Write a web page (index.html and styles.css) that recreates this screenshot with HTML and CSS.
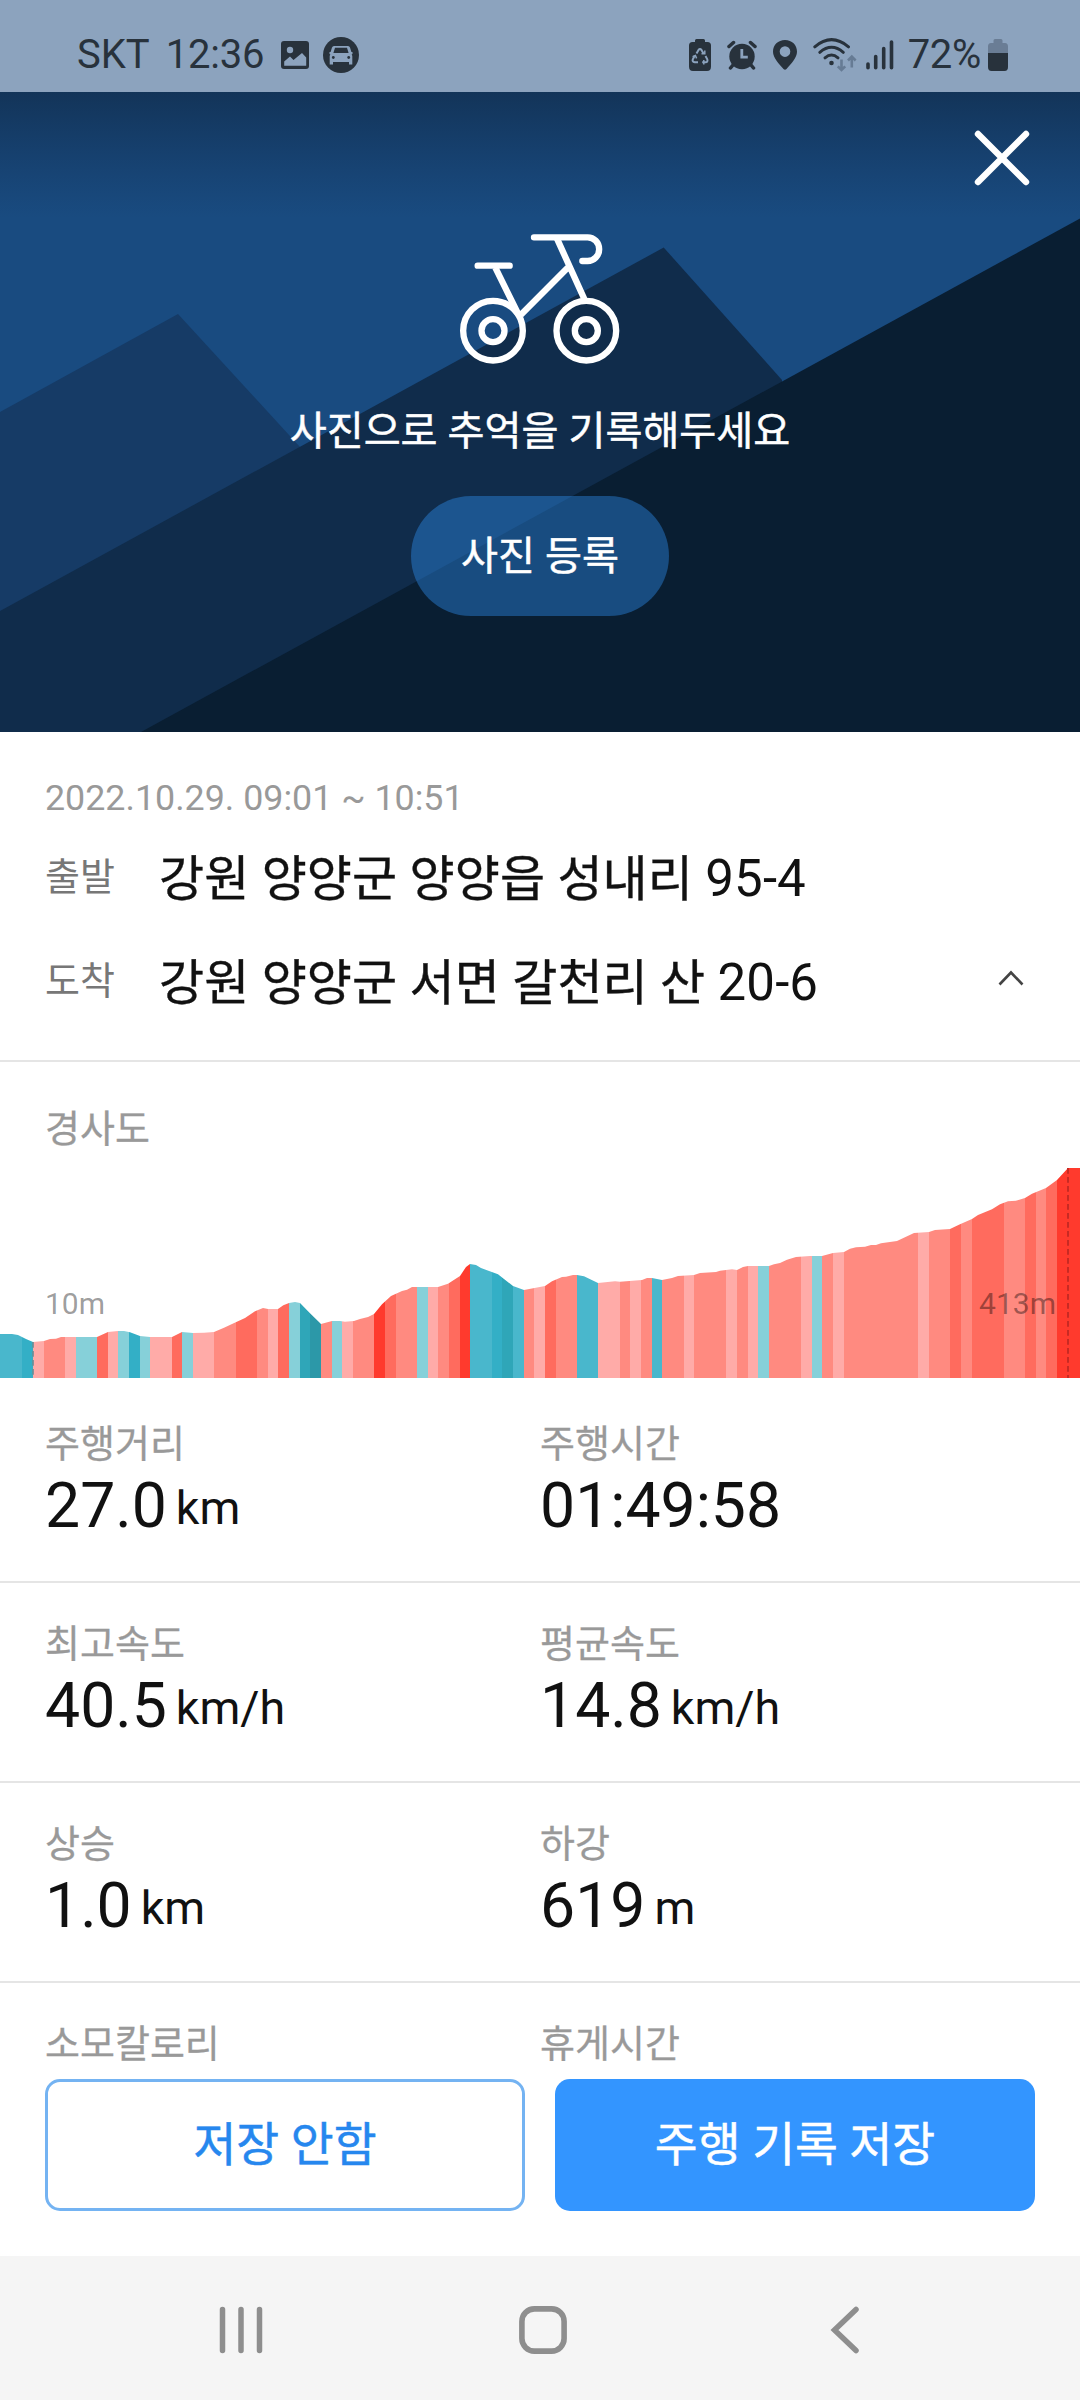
FILE: index.html
```html
<!DOCTYPE html>
<html lang="ko">
<head>
<meta charset="utf-8">
<title>주행 기록</title>
<link rel="stylesheet" href="styles.css">
</head>
<body>
<div class="screen">
  <header class="status">
    <div class="status-left">
      <span class="carrier">SKT</span>
      <span class="clock">12:36</span>
      <svg class="ic-photo" width="28" height="28" viewBox="0 0 28 28"><rect width="28" height="28" rx="3" fill="#28323c"/><circle cx="9" cy="9" r="3.2" fill="#8ca3be"/><path d="M3.2 24.8v-4.3L9 15.500l3.500 3.500L21 12l4.200 4.500v8.300z" fill="#8ca3be"/></svg>
      <svg class="ic-car" width="36" height="36" viewBox="0 0 36 36"><circle cx="18" cy="18" r="18" fill="#28323c"/><path fill="#8ca3be" d="M11 9h14q1.500 0 2 1.500l1.400 4.500h1.100v2l-.8.300.6 1.700v8.500h-3.300v-2.500H10v2.500H6.700V19l.6-1.700-.8-.3v-2h1.100L9 10.500Q9.500 9 11 9z"/><path fill="#28323c" d="M12 10.800h12l1.600 5.200H10.400z"/><circle cx="10.300" cy="20.500" r="1.400" fill="#28323c"/><circle cx="25.700" cy="20.500" r="1.400" fill="#28323c"/></svg>
    </div>
    <div class="status-right">
      <svg width="22" height="32" viewBox="0 0 22 32"><path fill="#28323c" d="M6 3V1.500Q6 0 7.500 0h7Q16 0 16 1.500V3h2.500Q22 3 22 6.500v21Q22 32 18 32H4q-4 0-4-4.500v-21Q0 3 3.500 3z"/><path d="M7.500 14.500 9.500 11q1.500-1.800 3 0l2 3.500M16.500 17l1.800 3.300q.8 2.700-1.800 3h-3.300M9 23.300H5.700q-2.800-.5-1.900-3L5.600 17" fill="none" stroke="#8ca3be" stroke-width="2"/><path d="M12.500 14.800h3.300v-3.200M14.800 21v4.500M3.600 17.700l2.800-1.300 1.200 3" fill="none" stroke="#8ca3be" stroke-width="1.500"/></svg>
      <svg class="ic-alarm" width="30" height="30" viewBox="0 0 30 30"><circle cx="15" cy="16.500" r="12.700" fill="#28323c"/><path d="M2 6.500 6.500 2.500M28 6.500 23.500 2.500M6 25l-2.500 3M24 25l2.500 3" stroke="#28323c" stroke-width="3.500" stroke-linecap="round"/><path d="M14.800 9v8.200h6" fill="none" stroke="#8ca3be" stroke-width="2.800"/></svg>
      <svg class="ic-pin" width="24" height="30" viewBox="0 0 24 30"><path fill="#28323c" fill-rule="evenodd" d="M12 0c7 0 12 5 12 11.800C24 18 18 24 13.500 29q-1.500 1.600-3 0C6 24 0 18 0 11.800 0 5 5 0 12 0zm0 6.300a5.300 5.300 0 1 0 0 10.600 5.300 5.300 0 0 0 0-10.600z"/></svg>
      <svg class="ic-wifi" width="44" height="34" viewBox="0 0 44 34"><g fill="none" stroke="#28323c" stroke-width="3" stroke-linecap="round"><path d="M1.800 8.800Q18.500-5.500 35.500 8.800"/><path d="M6.800 14.300q11.800-10 23.500 0"/><path d="M12 19.800q6.500-5.500 13 0"/></g><circle cx="18.500" cy="25" r="2.300" fill="#28323c"/><path d="M28.500 21.500v10M24.800 28.300l3.700 3.700 3.700-3.700M38.800 29.500v-10M35 22.500l3.800-3.800 3.800 3.800" fill="none" stroke="#667b94" stroke-width="2.600"/></svg>
      <svg class="ic-signal" width="28" height="30" viewBox="0 0 28 30"><path d="M2 24v3.800M9.700 16.500v11.300M17.700 8.500v19.300M25.500 2v25.800" stroke="#28323c" stroke-width="3.600" stroke-linecap="round"/></svg>
      <span class="percent">72%</span>
      <svg class="ic-battery" width="20" height="32" viewBox="0 0 20 32"><path fill="#6a7d95" d="M5.500 4V1.500Q5.500 0 7 0h6q1.500 0 1.500 1.500V4H17q3 0 3 3.500V14H0V7.500Q0 4 3 4z"/><path fill="#28323c" d="M0 14h20v14q0 4-3.500 4h-13Q0 32 0 28z"/></svg>
    </div>
  </header>

  <section class="hero">
    <svg class="hero-bg" width="1080" height="640" viewBox="0 92 1080 640">
      <defs><linearGradient id="shade" x1="0" y1="0" x2="0" y2="1"><stop offset="0" stop-color="#102b49" stop-opacity=".72"/><stop offset="1" stop-color="#123056" stop-opacity="0"/></linearGradient></defs>
      <rect y="92" width="1080" height="640" fill="#194b80"/>
      <path d="M0 412 178 314 300 447 300 732H0z" fill="#163b66"/>
      <path d="M0 611 663.700 247.500 782 380V732H0z" fill="#102c4b"/>
      <path d="M141 732 1080 218.500V732z" fill="#091e32"/>
      <rect y="92" width="1080" height="126" fill="url(#shade)"/>
    </svg>
    <svg class="close" width="64" height="64" viewBox="0 0 64 64"><path d="M8 8 56 56M56 8 8 56" stroke="#fff" stroke-width="6.400" stroke-linecap="round"/></svg>
    <svg class="bike" width="172" height="136" viewBox="162 90 516 408" fill="none" stroke="#fff" stroke-width="19" stroke-linecap="round">
      <circle cx="279" cy="392" r="89.500"/><circle cx="279" cy="392" r="34.500"/>
      <circle cx="559" cy="392" r="89.500"/><circle cx="559" cy="392" r="34.500"/>
      <path d="M233 197H329M402 112H563a34.500 35.500 0 0 1 0 71H547"/>
      <path d="M286 203 356 345M362 345 503 203M471 116 553 297" stroke-linecap="butt"/>
    </svg>
    <p class="hero-text">사진으로 추억을 기록해두세요</p>
    <button class="pill">사진 등록</button>
  </section>

  <main class="content">
    <section class="trip">
      <p class="date">2022.10.29. 09:01 ~ 10:51</p>
      <div class="place"><span class="place-label">출발</span><span class="address">강원 양양군 양양읍 성내리 <span class="num">95-4</span></span></div>
      <div class="place"><span class="place-label">도착</span><span class="address">강원 양양군 서면 갈천리 산 <span class="num">20-6</span></span>
        <svg class="chevron" width="28" height="18" viewBox="0 0 28 18"><path d="M2.500 15.500 14 3.500 25.500 15.500" fill="none" stroke="#444" stroke-width="2.600"/></svg>
      </div>
    </section>

    <section class="slope">
      <h2 class="label">경사도</h2>
      <div class="chart">
        <svg width="1080" height="210" viewBox="0 54 3240 630">
          <defs><clipPath id="profile"><path d="M0 552H36L54 555 78 567 99 576 132 573 150 567 168 566 183 561H291L324 546 354 543H372L390 547 420 558 450 561H516L546 546 579 549 612 548 642 546 672 533 696 522 735 504 765 484 789 474 804 477H834L850 466 867 459 885 456 900 459 930 490 963 522 996 513H1020L1035 515 1062 513 1080 507 1104 501 1122 492 1146 463 1173 438 1206 423 1221 419 1236 411H1314L1344 401 1380 378 1398 351 1410 342 1428 345 1443 354 1494 373 1539 408 1572 420 1635 408 1656 394 1686 381 1698 380 1719 375H1731L1752 379 1794 399 1845 394 1860 395 1926 390 1941 384H1956L1986 390 2016 384 2034 378 2082 375 2100 369 2148 366 2160 362 2196 358 2211 360 2229 351 2244 348H2307L2322 343 2340 339 2361 329 2388 321 2430 318H2466L2499 309 2532 306 2550 296 2568 292 2595 290 2613 285H2628L2643 280 2691 273 2742 249 2787 246 2805 240 2850 237 2880 223 2916 207 2934 195 2976 178 3000 163 3024 154 3048 152 3075 144 3096 131 3138 114 3171 90 3204 54H3240V684H0z"/></clipPath></defs>
          <g clip-path="url(#profile)">
            <g class="steep1"><path d="M99 54h33v630h-33zM195 54h33v630h-33zM324 54h30v630h-30zM450 54h66v630h-66zM579 54h63v630h-63zM804 54h30v630h-30zM1026 54h33v630h-33zM1284 54h30v630h-30zM1602 54h33v630h-33zM1794 54h66v630h-66zM1890 54h33v630h-33zM2052 54h30v630h-30zM2178 54h33v630h-33zM2244 54h30v630h-30zM2403 54h33v630h-33zM2499 54h33v630h-33zM2754 54h33v630h-33z"/></g>
            <g class="steep2"><path d="M132 54h63v630h-63zM642 54h66v630h-66zM771 54h33v630h-33zM963 54h33v630h-33zM1059 54h63v630h-63zM1188 54h63v630h-63zM1314 54h33v630h-33zM1572 54h30v630h-30zM1668 54h63v630h-63zM1860 54h30v630h-30zM1923 54h33v630h-33zM1986 54h66v630h-66zM2082 54h96v630h-96zM2211 54h33v630h-33zM2307 54h96v630h-96zM2466 54h33v630h-33zM2532 54h222v630h-222zM2787 54h63v630h-63zM2883 54h33v630h-33zM3012 54h63v630h-63zM3108 54h30v630h-30z"/></g>
            <g class="steep3"><path d="M291 54h33v630h-33zM516 54h30v630h-30zM708 54h63v630h-63zM834 54h33v630h-33zM1155 54h33v630h-33zM1347 54h33v630h-33zM1635 54h33v630h-33zM2850 54h33v630h-33zM2916 54h96v630h-96zM3075 54h33v630h-33zM3138 54h33v630h-33z"/></g>
            <g class="steep4"><path d="M1122 54h33v630h-33zM1380 54h30v630h-30zM3171 54h69v630h-69z"/></g>
            <g class="down1"><path d="M228 54h63v630h-63zM354 54h33v630h-33zM420 54h30v630h-30zM546 54h33v630h-33zM867 54h33v630h-33zM996 54h30v630h-30zM1251 54h33v630h-33zM2274 54h33v630h-33zM2436 54h30v630h-30z"/></g>
            <g class="down2"><path d="M0 54h66v630h-66zM1410 54h66v630h-66zM1539 54h33v630h-33zM1731 54h63v630h-63zM1956 54h30v630h-30z"/></g>
            <g class="down3"><path d="M66 54h33v630h-33zM387 54h33v630h-33zM1476 54h30v630h-30z"/></g>
            <g class="down4"><path d="M900 54h30v630h-30zM1506 54h33v630h-33z"/></g>
            <g class="down5"><path d="M930 54h33v630h-33z"/></g>
          </g>
          <path d="M99 576V684" stroke="#698e96" stroke-width="5" stroke-dasharray="17 10"/>
          <path d="M3204 54V684" stroke="#c82a24" stroke-width="6" stroke-dasharray="17 10"/>
        </svg>
        <span class="alt alt-start">10m</span>
        <span class="alt alt-end">413m</span>
      </div>
    </section>

    <section class="stats">
      <div class="row">
        <div class="stat"><h2 class="label">주행거리</h2><p class="value">27.0<span class="unit">km</span></p></div>
        <div class="stat"><h2 class="label">주행시간</h2><p class="value">01:49:58</p></div>
      </div>
      <div class="row">
        <div class="stat"><h2 class="label">최고속도</h2><p class="value">40.5<span class="unit">km/h</span></p></div>
        <div class="stat"><h2 class="label">평균속도</h2><p class="value">14.8<span class="unit">km/h</span></p></div>
      </div>
      <div class="row">
        <div class="stat"><h2 class="label">상승</h2><p class="value">1.0<span class="unit">km</span></p></div>
        <div class="stat"><h2 class="label">하강</h2><p class="value">619<span class="unit">m</span></p></div>
      </div>
      <div class="row">
        <div class="stat"><h2 class="label">소모칼로리</h2></div>
        <div class="stat"><h2 class="label">휴게시간</h2></div>
      </div>
    </section>
  </main>

  <footer class="actions">
    <button class="btn btn-outline">저장 안함</button>
    <button class="btn btn-fill">주행 기록 저장</button>
  </footer>

  <nav class="nav">
    <svg width="48" height="48" viewBox="0 0 48 48"><path d="M5.500 3.500v41M24 3.500v41M42.500 3.500v41" stroke="#8e8e8e" stroke-width="5.500" stroke-linecap="round"/></svg>
    <svg width="48" height="48" viewBox="0 0 48 48"><rect x="2.900" y="2.900" width="42.200" height="42.200" rx="12.500" fill="none" stroke="#8e8e8e" stroke-width="5.600"/></svg>
    <svg width="48" height="48" viewBox="0 0 48 48"><path d="M35 3.500 13.500 24 35 44.500" fill="none" stroke="#8e8e8e" stroke-width="5.500" stroke-linecap="round"/></svg>
  </nav>
</div>
</body>
</html>
```
FILE: styles.css
```css
* { box-sizing: border-box; margin: 0; padding: 0; }
body {
  font-family: Roboto, "Noto Sans CJK KR", sans-serif;
  font-weight: 400;
  color: #111;
  background: #fff;
}
svg { display: block; flex: none; }
button { font: inherit; border: 0; white-space: nowrap; }
.screen { width: 1080px; height: 2400px; display: flex; flex-direction: column; overflow: hidden; }

.status {
  height: 92px;
  padding: 18px 72px 0 77px;
  display: flex;
  justify-content: space-between;
  background: #8ca3be;
  color: #28323c;
  font-size: 40px;
  line-height: 74px;
}
.status-left, .status-right { display: flex; align-items: center; }
.clock { margin-left: 16px; letter-spacing: -0.2px; }
.ic-photo { margin-left: 17px; }
.ic-car { margin-left: 14px; }
.ic-alarm { margin-left: 16px; }
.ic-pin { margin-left: 16px; }
.ic-wifi { margin-left: 16px; }
.ic-signal { margin-left: 9px; }
.percent { margin-left: 14px; letter-spacing: -0.3px; }
.ic-battery { margin-left: 7px; }

.hero {
  position: relative;
  height: 640px;
  flex: none;
  display: flex;
  flex-direction: column;
  align-items: center;
  color: #fff;
  overflow: hidden;
}
.hero-bg { position: absolute; inset: 0; }
.close { position: absolute; top: 34px; right: 46px; }
.bike { position: relative; margin-top: 138px; }
.hero-text {
  position: relative;
  margin-top: 42px;
  font-size: 40.2px;
  line-height: 48px;
  white-space: nowrap;
  -webkit-text-stroke: .5px currentColor;
}
.pill {
  position: relative;
  margin-top: 40px;
  width: 258px;
  height: 120px;
  border-radius: 60px;
  background: rgba(50, 152, 255, .38);
  color: #fff;
  font-size: 40.2px;
  line-height: 122px;
  -webkit-text-stroke: .5px currentColor;
}

.content { flex: 1; min-height: 0; overflow: hidden; }
.trip {
  height: 330px;
  padding: 44px 45px 0;
  border-bottom: 2px solid #e5e5e5;
}
.date { margin-bottom: 29px; font-size: 35.800px; line-height: 44px; color: #999; }
.place { display: flex; align-items: flex-start; height: 60px; line-height: 60px; }
.place + .place { margin-top: 44px; }
.place-label { width: 114px; font-size: 38px; line-height: 57px; color: #777; }
.address { font-size: 49px; letter-spacing: .12px; white-space: nowrap; -webkit-text-stroke: .4px currentColor; }
.num { font-size: 51px; -webkit-text-stroke: 0; }
.chevron { margin: 16px 10px 0 auto; }

.label { font-size: 38px; font-weight: 400; line-height: 44px; color: #999; -webkit-text-stroke: .3px currentColor; }
.slope { padding-top: 45px; }
.slope .label { padding-left: 45px; }
.chart { position: relative; margin-top: 17px; height: 210px; }
.steep1 { fill: #ffaba8; }
.steep2 { fill: #ff8a80; }
.steep3 { fill: #ff6b5e; }
.steep4 { fill: #ff3a2d; }
.down1 { fill: #86d0d9; }
.down2 { fill: #49b7cc; }
.down3 { fill: #33afc6; }
.down4 { fill: #2fa6b8; }
.down5 { fill: #2c98a8; }
.alt { position: absolute; top: 117px; font-size: 30px; line-height: 38px; color: rgba(0, 0, 0, .4); }
.alt-start { left: 45px; }
.alt-end { right: 24px; }

.stats { padding-top: 5px; }
.row { display: grid; grid-template-columns: 1fr 1fr; height: 200px; padding-top: 39px; border-bottom: 2px solid #e5e5e5; }
.stat:first-child { padding-left: 45px; }
.value { display: flex; margin-top: 5px; font-size: 62.500px; line-height: 70px; }
.unit { margin-left: 9px; font-size: 46.600px; line-height: 75px; }

.actions { display: grid; grid-template-columns: 1fr 1fr; gap: 30px; height: 177px; flex: none; padding: 0 45px 45px; background: #fff; }
.btn { border-radius: 15px; font-size: 46.600px; line-height: 132px; -webkit-text-stroke: .5px currentColor; }
.btn-outline { border: 3px solid #74b3f2; background: #fff; color: #2687ee; line-height: 126px; }
.btn-fill { background: #3395ff; color: #fff; }

.nav { display: flex; justify-content: space-between; align-items: center; height: 144px; flex: none; padding: 4px 211px 0 217px; background: #f5f5f5; }
```
